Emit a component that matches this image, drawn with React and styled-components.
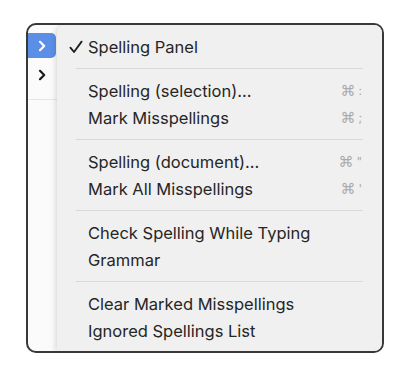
import React from "react";
import styled, { createGlobalStyle } from "styled-components";

const GlobalStyle = createGlobalStyle`
	body {
		margin: 0;
		background: #ffffff;
		font-family: Inter, "Noto Sans", sans-serif;
	}
`;

const sections = [
	[{ label: "Spelling Panel", checked: true }],
	[
		{ label: "Spelling (selection)...", shortcut: ":" },
		{ label: "Mark Misspellings", shortcut: ";" },
	],
	[
		{ label: "Spelling (document)...", shortcut: "\"" },
		{ label: "Mark All Misspellings", shortcut: "'" },
	],
	[{ label: "Check Spelling While Typing" }, { label: "Grammar" }],
	[{ label: "Clear Marked Misspellings" }, { label: "Ignored Spellings List" }],
];

function Chevron({ color }) {
	return (
		<svg width="10" height="12" viewBox="0 0 10 12">
			<path
				d="M3 1.8 L7.2 6 L3 10.2"
				fill="none"
				stroke={color}
				strokeWidth="2.2"
				strokeLinecap="round"
				strokeLinejoin="round"
			/>
		</svg>
	);
}

function CheckMark() {
	return (
		<svg width="14" height="14" viewBox="0 0 14 14">
			<path
				d="M1.4 7.6 L5 12 L12.6 1.6"
				fill="none"
				stroke="#1e1e1e"
				strokeWidth="1.8"
				strokeLinecap="round"
				strokeLinejoin="round"
			/>
		</svg>
	);
}

function App() {
	return (
		<>
			<GlobalStyle />
			<Frame>
				<ParentMenu>
					<ParentItem $active>
						<Chevron color="#ffffff" />
					</ParentItem>
					<ParentItem>
						<Chevron color="#1a1a1a" />
					</ParentItem>
					<ParentDivider />
				</ParentMenu>
				<SubMenu>
					{sections.map((items, i) => (
						<React.Fragment key={i}>
							{i > 0 && <Separator />}
							{items.map((item) => (
								<Item key={item.label}>
									<Check>{item.checked && <CheckMark />}</Check>
									<Label>{item.label}</Label>
									{item.shortcut && (
										<Shortcut>
											<Cmd>⌘</Cmd>
											{item.shortcut}
										</Shortcut>
									)}
								</Item>
							))}
						</React.Fragment>
					))}
				</SubMenu>
			</Frame>
		</>
	);
}

const Frame = styled.div`
	box-sizing: border-box;
	margin: 23px 0 0 26px;
	width: 358px;
	height: 330px;
	border: 2px solid #383838;
	border-radius: 10px;
	overflow: hidden;
	display: flex;
	background: linear-gradient(to right, #fbfbfb 0%, #f6f6f6 70%, #e4e4e4 100%);
`;

const ParentMenu = styled.div`
	width: 29px;
	flex-shrink: 0;
	padding-top: 8px;
	display: flex;
	flex-direction: column;
	gap: 4px;
`;

const ParentItem = styled.div`
	height: 25px;
	width: 28px;
	display: flex;
	align-items: center;
	justify-content: center;
	border-radius: 0 5px 5px 0;
	background: ${(p) => (p.$active ? "#5b8ee6" : "transparent")};
`;

const ParentDivider = styled.div`
	margin-top: 8px;
	height: 1px;
	background: #e6e6e6;
`;

const SubMenu = styled.div`
	flex: 1;
	padding: 8px 0 6px;
	background: #f0f0f0;
	border-top-left-radius: 8px;
	box-shadow: -2px 0 5px rgba(0, 0, 0, 0.12);
	display: flex;
	flex-direction: column;
`;

const Item = styled.div`
	height: 27px;
	display: flex;
	align-items: center;
	padding: 0 20px 0 12px;
	color: #262626;
	font-size: 16.5px;
`;

const Check = styled.span`
	width: 19px;
	display: flex;
	align-items: center;
`;

const Label = styled.span`
	flex: 1;
`;

const Shortcut = styled.span`
	font-size: 12px;
	color: #ababab;
	display: flex;
	align-items: center;
	gap: 3px;
`;

const Cmd = styled.span`
	font-family: "DejaVu Sans", sans-serif;
	font-size: 15px;
`;

const Separator = styled.div`
	height: 1px;
	margin: 8px 19px 8px 19px;
	background: #d9d9d9;
`;

export default App;
